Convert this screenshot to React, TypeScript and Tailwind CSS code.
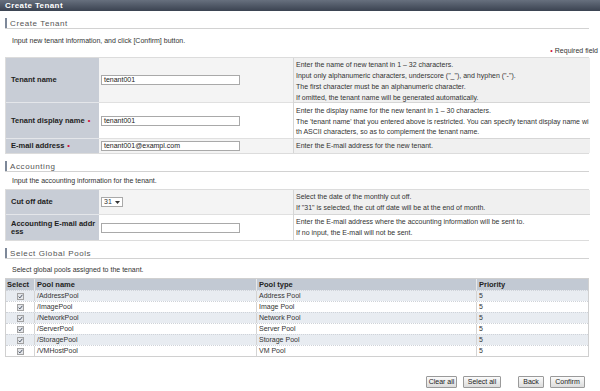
import React from 'react';

const pools = [
  { name: '/AddressPool', type: 'Address Pool', priority: 5 },
  { name: '/ImagePool', type: 'Image Pool', priority: 5 },
  { name: '/NetworkPool', type: 'Network Pool', priority: 5 },
  { name: '/ServerPool', type: 'Server Pool', priority: 5 },
  { name: '/StoragePool', type: 'Storage Pool', priority: 5 },
  { name: '/VMHostPool', type: 'VM Pool', priority: 5 },
];

const Req = () => <span className="ml-[3px] text-[#d0103a]">•</span>;

const SectionHeader = ({ title }: { title: string }) => (
  <div className="flex h-[11px] items-stretch border-b border-[#d2d2d2]">
    <div className="w-[2px] bg-[#7d8899]" />
    <span className="ml-[3px] text-[8px] leading-[11px] tracking-[0.6px] text-[#555]">{title}</span>
  </div>
);

const TextInput = ({ value }: { value?: string }) => (
  <div className="h-[10px] w-[139px] border border-[#a9a9a9] bg-white pl-[2px] text-[7px] leading-[8px] text-[#222]">
    {value}
  </div>
);

const Check = () => (
  <span className="inline-flex h-[7px] w-[7px] items-center justify-center border border-[#a2a2a2] bg-[#e4e6ea]">
    <svg width="5" height="5" viewBox="0 0 5 5">
      <path d="M0.6 2.6 L1.9 3.9 L4.4 0.8" fill="none" stroke="#3a4658" strokeWidth="0.9" />
    </svg>
  </span>
);

const Btn = ({ label, className }: { label: string; className: string }) => (
  <button
    type="button"
    className={`block h-[12px] shrink-0 rounded-[1px] border border-[#9a9a9a] bg-gradient-to-b from-[#fbfbfb] to-[#dcdcdc] p-0 text-[7px] leading-[10px] text-[#222] ${className}`}
  >
    {label}
  </button>
);

export default function App() {
  return (
    <div className="h-[391px] w-[600px] overflow-hidden bg-white font-['Liberation_Sans',Arial,sans-serif] text-[#333]">
      <div className="h-[11px] bg-gradient-to-b from-[#67707e] to-[#3b4351] pl-[5px] text-[8px] font-bold leading-[11px] tracking-[0.4px] text-white">
        Create Tenant
      </div>

      <div className="pl-[5px] pr-[11px]">
        <div className="mt-[7px]">
          <SectionHeader title="Create Tenant" />
        </div>
        <p className="mt-[7px] pl-[7px] text-[7px] leading-[10px]">
          Input new tenant information, and click [Confirm] button.
        </p>
        <p className="-mr-[9px] text-right text-[7px] leading-[10px]">
          <span className="mr-[2px] text-[#d0103a]">•</span>Required field
        </p>

        <div className="mt-[1px] grid grid-cols-[93px_194px_297px] border border-[#dcdcdc] text-[7px]">
          <div className="flex h-[45px] items-center border-b border-[#e4e6ea] bg-[#c8cdd6] pl-[5px] text-[7.5px] font-bold text-[#222]">
            Tenant name
          </div>
          <div className="flex h-[45px] items-center border-b border-[#e0e0e0] bg-[#f4f4f4] pl-[2px]">
            <TextInput value="tenant001" />
          </div>
          <div className="h-[45px] border-b border-l border-[#d6d6d6] bg-[#f0f0f0] pl-[2px] pt-[1px] leading-[11px]">
            <div>Enter the name of new tenant in 1 – 32 characters.</div>
            <div>Input only alphanumeric characters, underscore ("_"), and hyphen ("-").</div>
            <div>The first character must be an alphanumeric character.</div>
            <div>If omitted, the tenant name will be generated automatically.</div>
          </div>

          <div className="flex h-[36px] items-center border-b border-[#e4e6ea] bg-[#c8cdd6] pl-[5px] text-[7.5px] font-bold text-[#222]">
            Tenant display name
            <Req />
          </div>
          <div className="flex h-[36px] items-center border-b border-[#e0e0e0] bg-white pl-[2px]">
            <TextInput value="tenant001" />
          </div>
          <div className="h-[36px] border-b border-l border-[#d6d6d6] bg-white pl-[2px] pt-[3px] leading-[10.5px]">
            <div>Enter the display name for the new tenant in 1 – 30 characters.</div>
            <div className="overflow-hidden whitespace-nowrap">
              The 'tenant name' that you entered above is restricted. You can specify tenant display name wi
            </div>
            <div>th ASCII characters, so as to complement the tenant name.</div>
          </div>

          <div className="flex h-[14px] items-center bg-[#c8cdd6] pl-[5px] text-[7.5px] font-bold text-[#222]">
            E-mail address
            <Req />
          </div>
          <div className="flex h-[14px] items-center bg-[#f4f4f4] pl-[2px]">
            <TextInput value="tenant001@exampl.com" />
          </div>
          <div className="flex h-[14px] items-center border-l border-[#d6d6d6] bg-[#f0f0f0] pl-[2px]">
            Enter the E-mail address for the new tenant.
          </div>
        </div>

        <div className="mt-[7px]">
          <SectionHeader title="Accounting" />
        </div>
        <p className="mt-[4px] pl-[7px] text-[7px] leading-[10px]">
          Input the accounting information for the tenant.
        </p>

        <div className="mt-[3px] grid grid-cols-[93px_194px_297px] border border-[#dcdcdc] text-[7px]">
          <div className="flex h-[25px] items-center border-b border-[#e4e6ea] bg-[#c8cdd6] pl-[5px] text-[7.5px] font-bold text-[#222]">
            Cut off date
          </div>
          <div className="flex h-[25px] items-center border-b border-[#e0e0e0] bg-[#f4f4f4] pl-[2px]">
            <div className="flex h-[10px] w-[22px] items-center justify-between border border-[#a9a9a9] bg-white px-[2px] text-[7px]">
              <span>31</span>
              <svg width="5" height="3" viewBox="0 0 5 3">
                <path d="M0 0 H5 L2.5 3 Z" fill="#333" />
              </svg>
            </div>
          </div>
          <div className="h-[25px] border-b border-l border-[#d6d6d6] bg-[#f0f0f0] pl-[2px] pt-[1px] leading-[11px]">
            <div>Select the date of the monthly cut off.</div>
            <div>If "31" is selected, the cut off date will be at the end of month.</div>
          </div>

          <div className="flex h-[25px] items-center bg-[#c8cdd6] pl-[5px] text-[7.5px] font-bold leading-[8px] text-[#222]">
            <span>
              Accounting E-mail addr
              <br />
              ess
            </span>
          </div>
          <div className="flex h-[25px] items-center bg-white pl-[2px]">
            <TextInput />
          </div>
          <div className="h-[25px] border-l border-[#d6d6d6] bg-white pl-[2px] pt-[1px] leading-[11px]">
            <div>Enter the E-mail address where the accounting information will be sent to.</div>
            <div>If no input, the E-mail will not be sent.</div>
          </div>
        </div>

        <div className="mt-[7px]">
          <SectionHeader title="Select Global Pools" />
        </div>
        <p className="mt-[6px] pl-[7px] text-[7px] leading-[10px]">Select global pools assigned to the tenant.</p>

        <div className="mt-[3px] border border-[#d0d0d0] text-[7px]">
          <div className="grid h-[11px] grid-cols-[28px_222px_220px_112px] bg-[#c2c9d3] text-[7.5px] font-bold leading-[11px] text-[#222]">
            <div className="pl-[1px]">Select</div>
            <div className="border-l border-[#e8e8e8] pl-[2px]">Pool name</div>
            <div className="border-l border-[#e8e8e8] pl-[2px]">Pool type</div>
            <div className="border-l border-[#e8e8e8] pl-[2px]">Priority</div>
          </div>
          {pools.map((p, i) => (
            <div
              key={p.name}
              className={`grid h-[11px] grid-cols-[28px_222px_220px_112px] border-t border-dotted border-[#cfd3d9] leading-[10px] ${
                i % 2 === 0 ? 'bg-[#e8ecf1]' : 'bg-white'
              }`}
            >
              <div className="flex items-center justify-center">
                <Check />
              </div>
              <div className="border-l border-[#d4d4d4] pl-[2px]">{p.name}</div>
              <div className="border-l border-[#d4d4d4] pl-[2px]">{p.type}</div>
              <div className="border-l border-[#d4d4d4] pl-[2px]">{p.priority}</div>
            </div>
          ))}
        </div>

        <div className="mt-[19px] flex items-start justify-end pr-[4px]">
          <Btn label="Clear all" className="w-[31px]" />
          <Btn label="Select all" className="ml-[6px] w-[38px]" />
          <Btn label="Back" className="ml-[17px] w-[26px]" />
          <Btn label="Confirm" className="ml-[6px] w-[35px]" />
        </div>
      </div>
    </div>
  );
}
